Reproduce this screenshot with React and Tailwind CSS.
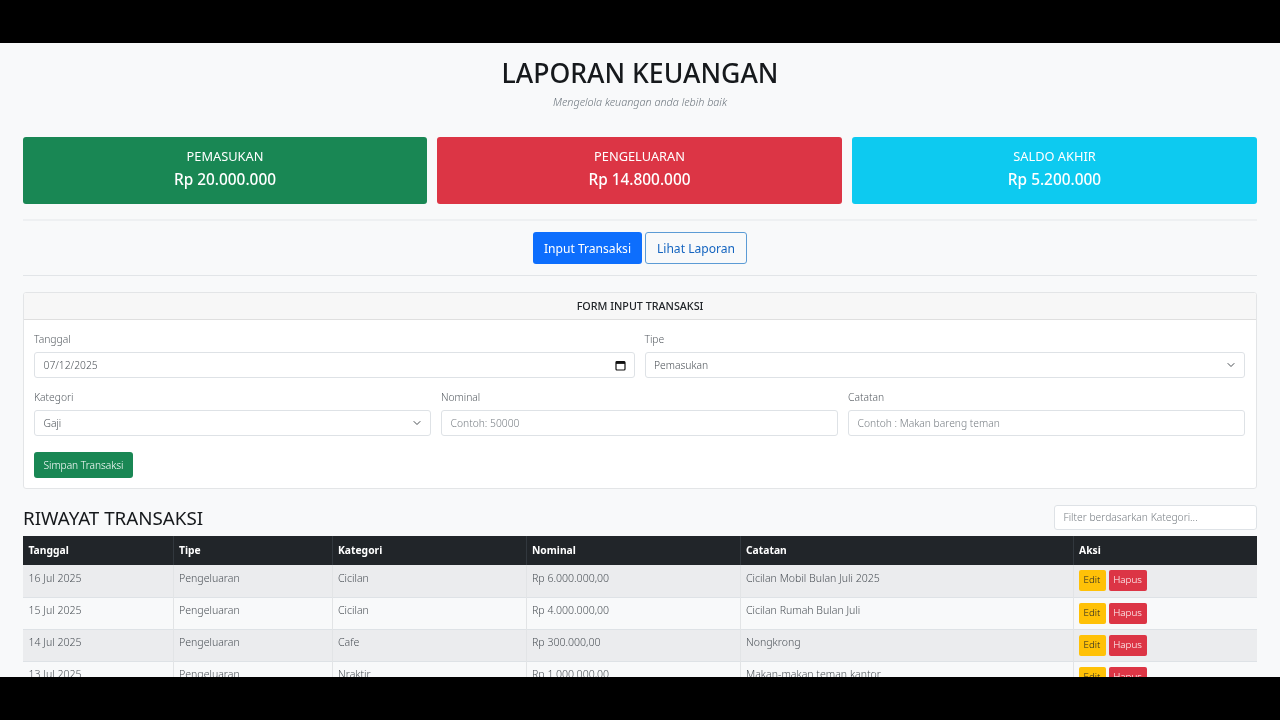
import React from "react";
import { ChevronDown } from "lucide-react";

const font = { fontFamily: '"Noto Sans", sans-serif' };

function Stat({ title, value, bg, width }) {
  return (
    <div className={`${width} shrink-0 h-[67px] rounded-[3px] ${bg} text-white flex flex-col items-center pt-[10px]`}>
      <div className="text-[12.8px] leading-[18px]">{title}</div>
      <div className="text-[15.4px] leading-[24px] font-medium mt-[3px]">{value}</div>
    </div>
  );
}

function Label({ children }) {
  return <div className="text-[10.3px] leading-[14px] text-[#555b61] font-light mb-[6px]">{children}</div>;
}

function Box({ children, right, muted }) {
  return (
    <div className={`h-[26px] bg-white border border-[#dee2e6] rounded-[3px] px-[8.5px] flex items-center justify-between text-[10.3px] font-light ${muted ? "text-[#777d83]" : "text-[#4a5056]"}`}>
      <span className="mt-[1px]">{children}</span>
      {right}
    </div>
  );
}

const Chevron = <ChevronDown size={12} strokeWidth={1.8} className="text-[#343a40] mr-[-1px]" />;
const Calendar = (
  <svg width="11" height="11" viewBox="0 0 11 11" className="mr-[-1px]">
    <rect x="1" y="1.5" width="9" height="8.5" rx="1" fill="none" stroke="#111" strokeWidth="1.2" />
    <rect x="1" y="1.5" width="9" height="2.4" fill="#111" />
  </svg>
);

const rows = [
  ["16 Jul 2025", "Pengeluaran", "Cicilan", "Rp 6.000.000,00", "Cicilan Mobil Bulan Juli 2025"],
  ["15 Jul 2025", "Pengeluaran", "Cicilan", "Rp 4.000.000,00", "Cicilan Rumah Bulan Juli"],
  ["14 Jul 2025", "Pengeluaran", "Cafe", "Rp 300.000,00", "Nongkrong"],
  ["13 Jul 2025", "Pengeluaran", "Nraktir", "Rp 1.000.000,00", "Makan-makan teman kantor"],
];

const heads = ["Tanggal", "Tipe", "Kategori", "Nominal", "Catatan", "Aksi"];

export default function App() {
  return (
    <div className="h-[720px] w-[1280px] bg-black flex flex-col overflow-hidden" style={font}>
      <div className="h-[43px] shrink-0 bg-black" />
      <main className="h-[634px] shrink-0 overflow-hidden bg-[#f8f9fa]">
        <div className="px-[23px] will-change-transform">
          <h1 className="text-[26.6px] leading-[30px] font-medium text-[#16191c] text-center pt-[15px]">LAPORAN KEUANGAN</h1>
          <p className="text-[10.8px] leading-[14px] italic font-light text-[#6c757d] text-center mt-[7px]">Mengelola keuangan anda lebih baik</p>

          <div className="flex gap-[10px] mt-[28px]">
            <Stat width="w-[404px]" title="PEMASUKAN" value="Rp 20.000.000" bg="bg-[#198754]" />
            <Stat width="w-[405px]" title="PENGELUARAN" value="Rp 14.800.000" bg="bg-[#dc3545]" />
            <Stat width="w-[405px]" title="SALDO AKHIR" value="Rp 5.200.000" bg="bg-[#0dcaf0]" />
          </div>

          <div className="h-[2px] bg-[#eef0f2] mt-[15px]" />

          <div className="flex justify-center gap-[3px] mt-[11px]">
            <div className="h-[32px] w-[109px] rounded-[3px] bg-[#0d6efd] text-white text-[12.1px] flex items-center justify-center pt-[3px]">Input Transaksi</div>
            <div className="h-[32px] w-[102px] rounded-[3px] border border-[#5b9bd5] text-[#1565c0] text-[12.1px] flex items-center justify-center pt-[3px]">Lihat Laporan</div>
          </div>

          <div className="h-[1px] bg-[#e2e5e8] mt-[11px]" />

          <section className="mt-[16px] h-[197px] bg-white border border-[#e3e5e7] rounded-[3px] overflow-hidden">
            <div className="h-[27px] bg-[#f7f7f7] border-b border-[#dfdfdf] flex items-center justify-center text-[10.75px] font-medium text-[#212529]">FORM INPUT TRANSAKSI</div>
            <div className="pl-[10px] pr-[11px] pt-[12px]">
              <div className="flex gap-[10px]">
                <div className="flex-1">
                  <Label>Tanggal</Label>
                  <Box right={Calendar}>07/12/2025</Box>
                </div>
                <div className="flex-1">
                  <Label>Tipe</Label>
                  <Box right={Chevron}>Pemasukan</Box>
                </div>
              </div>
              <div className="flex gap-[10px] mt-[12px]">
                <div className="flex-1">
                  <Label>Kategori</Label>
                  <Box right={Chevron}>Gaji</Box>
                </div>
                <div className="flex-1">
                  <Label>Nominal</Label>
                  <Box muted>Contoh: 50000</Box>
                </div>
                <div className="flex-1">
                  <Label>Catatan</Label>
                  <Box muted>Contoh : Makan bareng teman</Box>
                </div>
              </div>
              <div className="mt-[16px] h-[26px] w-[99px] rounded-[3px] bg-[#198754] text-white text-[10.2px] font-light flex items-center justify-center pt-[1px]">Simpan Transaksi</div>
            </div>
          </section>

          <div className="flex items-center justify-between mt-[16px] h-[25px]">
            <h2 className="text-[18.8px] leading-[25px] text-[#16191c] font-normal mt-[2px]">RIWAYAT TRANSAKSI</h2>
            <div className="w-[203px]">
              <div className="h-[25px] bg-white border border-[#dee2e6] rounded-[3px] px-[8.5px] flex items-center text-[10.3px] font-light text-[#777d83] pt-[1px]">Filter berdasarkan Kategori...</div>
            </div>
          </div>

          <table className="w-full table-fixed border-collapse mt-[6px] text-[10.3px]">
            <colgroup>
              <col className="w-[150px]" />
              <col className="w-[159px]" />
              <col className="w-[194px]" />
              <col className="w-[214px]" />
              <col className="w-[333px]" />
              <col className="w-[184px]" />
            </colgroup>
            <thead>
              <tr className="h-[29px] bg-[#212529] text-white">
                {heads.map((h) => (
                  <th key={h} className="text-left font-bold px-[5.5px] border-r border-[#32383e] last:border-r-0">{h}</th>
                ))}
              </tr>
            </thead>
            <tbody>
              {rows.map((r, i) => (
                <tr key={r[0]} className={`h-[32px] border-b border-[#dee2e6] ${i % 2 === 0 ? "bg-[#ebecee]" : "bg-[#f8f9fa]"}`}>
                  {r.map((c, j) => (
                    <td key={j} className="px-[5.5px] pb-[4px] pt-0 text-[10.55px] font-light text-[#4a5056] border-r border-[#e2e4e6]">{c}</td>
                  ))}
                  <td className="px-[5px]">
                    <div className="flex gap-[3px]">
                      <span className="w-[27px] h-[21px] rounded-[2px] bg-[#ffc107] text-[#212529] text-[9.8px] font-light flex items-center justify-center">Edit</span>
                      <span className="w-[38px] h-[21px] rounded-[2px] bg-[#dc3545] text-white text-[9.8px] font-light flex items-center justify-center">Hapus</span>
                    </div>
                  </td>
                </tr>
              ))}
            </tbody>
          </table>
        </div>
      </main>
      <div className="h-[43px] shrink-0 bg-black" />
    </div>
  );
}
